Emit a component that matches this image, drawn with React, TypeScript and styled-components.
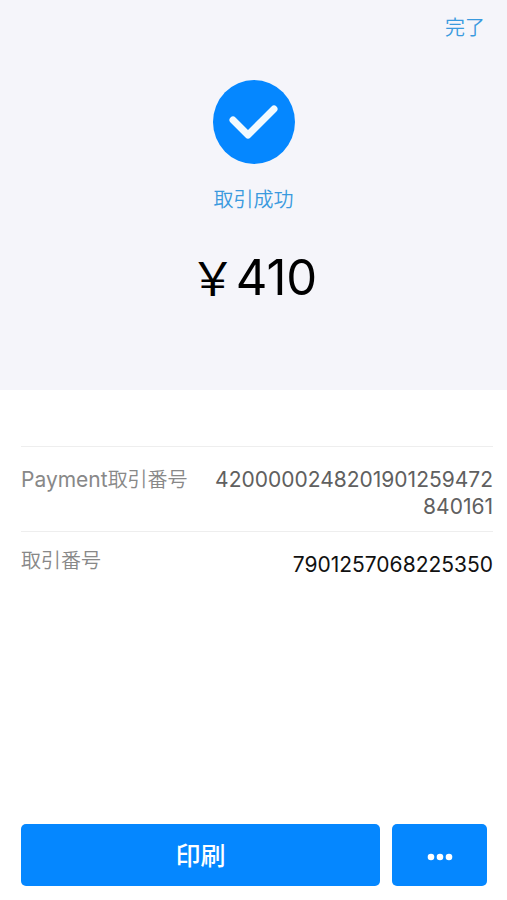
import React from "react";
import styled, { createGlobalStyle } from "styled-components";

const GlobalStyle = createGlobalStyle`
  * { box-sizing: border-box; }
  body {
    margin: 0;
    background: #ffffff;
    font-family: Inter, "Noto Sans CJK JP", sans-serif;
  }
  button { font-family: inherit; border: 0; padding: 0; cursor: pointer; }
`;

const Page = styled.main`
  display: flex;
  flex-direction: column;
  min-height: 100vh;
`;

const Summary = styled.section`
  display: flex;
  flex-direction: column;
  align-items: center;
  padding-bottom: 82px;
  background: #f5f5fa;
`;

const DoneButton = styled.button`
  align-self: flex-end;
  margin: 14px 22px 38px 0;
  background: none;
  color: #3a9ade;
  font-size: 20px;
  font-weight: 350;
  line-height: 28px;
`;

const CheckIcon = styled.svg`
  display: block;
  width: 82px;
  height: 84px;
`;

const Status = styled.p`
  margin: 20px 0 0;
  color: #3a9ade;
  font-size: 20px;
  font-weight: 350;
  line-height: 32px;
`;

const Amount = styled.h1`
  display: flex;
  align-items: baseline;
  margin: 29px 0 0;
  color: #000000;
  font-size: 49px;
  font-weight: 400;
  line-height: 60px;
`;

const Currency = styled.span`
  font-family: "Noto Sans CJK JP", sans-serif;
  font-size: 46px;
`;

const Details = styled.dl`
  margin: 56px 14px 0 21px;
`;

const DetailRow = styled.div<{ $single: boolean }>`
  display: flex;
  justify-content: space-between;
  gap: 24px;
  padding: ${({ $single }) => ($single ? "16px" : "19px")} 0 11px;
  border-top: 1px solid #eeeeee;
`;

const Label = styled.dt`
  flex: none;
  color: #888888;
  font-size: 20px;
  font-weight: 350;
  line-height: 27px;
`;

const Brand = styled.span`
  font-size: 21px;
  font-weight: 400;
`;

const Value = styled.dd<{ $single: boolean }>`
  margin: 0;
  color: ${({ $single }) => ($single ? "#111111" : "#606060")};
  font-size: 21px;
  line-height: ${({ $single }) => ($single ? "33px" : "27px")};
  text-align: right;
  overflow-wrap: anywhere;
`;

const Actions = styled.footer`
  display: flex;
  gap: 12px;
  margin-top: auto;
  padding: 0 20px 14px 21px;
`;

const ActionButton = styled.button<{ $compact?: boolean }>`
  display: flex;
  flex: ${({ $compact }) => ($compact ? "0 0 95px" : "1")};
  align-items: center;
  justify-content: center;
  height: 62px;
  padding-top: 2px;
  border-radius: 5px;
  background: #0587ff;
  color: #ffffff;
  font-size: 25px;
  font-weight: 500;
  line-height: 32px;
`;

const Dots = styled.svg`
  display: block;
  margin-top: 2px;
`;

const details = [
  { brand: "Payment", label: "取引番号", value: "4200000248201901259472840161", single: false },
  { brand: "", label: "取引番号", value: "7901257068225350", single: true },
];

export default function App() {
  return (
    <>
      <GlobalStyle />
      <Page lang="ja">
        <Summary>
          <DoneButton type="button">完了</DoneButton>
          <CheckIcon viewBox="0 0 82 84" aria-hidden="true">
            <ellipse cx="41" cy="42" rx="41" ry="42" fill="#0587ff" />
            <path
              d="M20 40 L35 55 L61 29"
              fill="none"
              stroke="#f2faff"
              strokeWidth="7"
              strokeLinecap="round"
              strokeLinejoin="round"
            />
          </CheckIcon>
          <Status>取引成功</Status>
          <Amount>
            <Currency>￥</Currency>
            <span>410</span>
          </Amount>
        </Summary>
        <Details>
          {details.map(({ brand, label, value, single }) => (
            <DetailRow key={value} $single={single}>
              <Label>
                {brand && <Brand>{brand}</Brand>}
                {label}
              </Label>
              <Value $single={single}>{value}</Value>
            </DetailRow>
          ))}
        </Details>
        <Actions>
          <ActionButton type="button">印刷</ActionButton>
          <ActionButton type="button" $compact aria-label="その他">
            <Dots width="26" height="8" viewBox="0 0 26 8" fill="#ffffff" aria-hidden="true">
              <circle cx="4" cy="4" r="3.3" />
              <circle cx="13" cy="4" r="3.3" />
              <circle cx="22" cy="4" r="3.3" />
            </Dots>
          </ActionButton>
        </Actions>
      </Page>
    </>
  );
}
